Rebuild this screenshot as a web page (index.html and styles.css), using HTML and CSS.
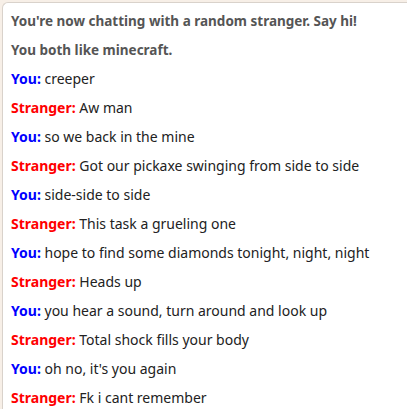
FILE: index.html
```html
<!DOCTYPE html>
<html lang="en">
<head>
  <meta charset="UTF-8">
  <title>Chat</title>
  <link rel="stylesheet" href="styles.css">
</head>
<body>
  <div class="chatbox">
    <div class="logitem"><p class="statuslog">You're now chatting with a random stranger. Say hi!</p></div>
    <div class="logitem"><p class="statuslog">You both like minecraft.</p></div>
    <div class="logitem"><p class="youmsg"><strong class="msgsource">You:</strong> <span>creeper</span></p></div>
    <div class="logitem"><p class="strangermsg"><strong class="msgsource">Stranger:</strong> <span>Aw man</span></p></div>
    <div class="logitem"><p class="youmsg"><strong class="msgsource">You:</strong> <span>so we back in the mine</span></p></div>
    <div class="logitem"><p class="strangermsg"><strong class="msgsource">Stranger:</strong> <span>Got our pickaxe swinging from side to side</span></p></div>
    <div class="logitem"><p class="youmsg"><strong class="msgsource">You:</strong> <span>side-side to side</span></p></div>
    <div class="logitem"><p class="strangermsg"><strong class="msgsource">Stranger:</strong> <span>This task a grueling one</span></p></div>
    <div class="logitem"><p class="youmsg"><strong class="msgsource">You:</strong> <span>hope to find some diamonds tonight, night, night</span></p></div>
    <div class="logitem"><p class="strangermsg"><strong class="msgsource">Stranger:</strong> <span>Heads up</span></p></div>
    <div class="logitem"><p class="youmsg"><strong class="msgsource">You:</strong> <span>you hear a sound, turn around and look up</span></p></div>
    <div class="logitem"><p class="strangermsg"><strong class="msgsource">Stranger:</strong> <span>Total shock fills your body</span></p></div>
    <div class="logitem"><p class="youmsg"><strong class="msgsource">You:</strong> <span>oh no, it's you again</span></p></div>
    <div class="logitem"><p class="strangermsg"><strong class="msgsource">Stranger:</strong> <span>Fk i cant remember</span></p></div>
  </div>
</body>
</html>
```

FILE: styles.css
```css
body {
  margin: 0;
  padding: 2px 0 0 2px;
  background-color: #f7efe7;
  font-family: "Noto Sans", "Open Sans", sans-serif;
  font-size: 14px;
  color: #222;
  overflow: hidden;
}

.chatbox {
  background: #fff;
  border: 1px solid #d9d2cb;
  border-right: none;
  border-bottom: none;
  border-radius: 6px 0 0 0;
  padding: 4px 8px 0 8px;
  height: 420px;
}

.logitem p {
  margin: 0;
  line-height: 29px;
  white-space: nowrap;
}

.statuslog {
  color: #555;
  font-weight: bold;
  font-size: 13.5px;
}

.logitem:nth-child(2) .statuslog {
  line-height: 28px;
}

.msgsource {
  font-weight: bold;
}

.youmsg .msgsource {
  color: #00f;
}

.strangermsg .msgsource {
  color: #f00;
}
```
